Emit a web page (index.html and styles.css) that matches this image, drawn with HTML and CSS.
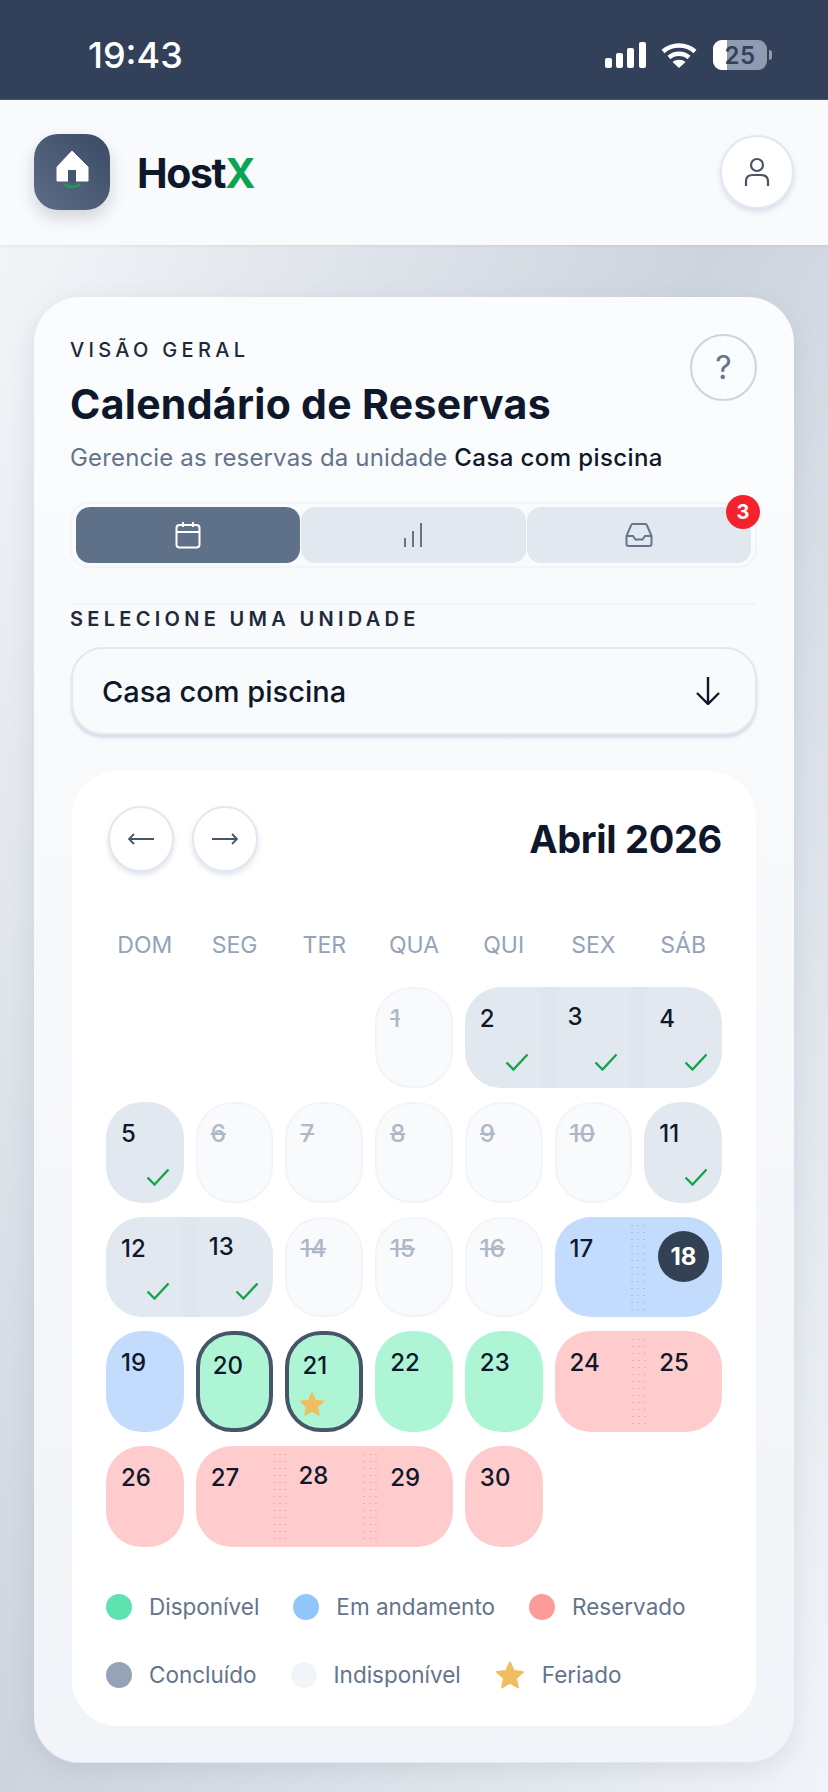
FILE: index.html
```html
<!DOCTYPE html>
<html lang="pt-BR">
<head>
    <meta charset="UTF-8">
    <meta name="viewport" content="width=device-width, initial-scale=1.0">
    <title>HostX - Calendário de Reservas</title>
    <link rel="stylesheet" href="styles.css">
</head>
<body>
    <svg class="defs" width="0" height="0">
        <symbol id="check" viewBox="0 0 24 18"><path d="M1.5 9.5 8.500 16.500 22.500 1.500" fill="none" stroke="#16a34a" stroke-width="2.4"/></symbol>
        <symbol id="star" viewBox="0 0 24 24"><path d="M12 2 15 8.800 22.300 9.600 16.800 14.600 18.400 22 12 18.200 5.600 22 7.200 14.600 1.700 9.600 9 8.800Z" fill="#efbf5f" stroke="#efbf5f" stroke-width="1.500" stroke-linejoin="round"/></symbol>
    </svg>

    <div class="statusbar">
        <span class="time">19:43</span>
        <div class="status-icons">
            <svg class="signal" viewBox="0 0 41 26" width="41" height="26" fill="#fff">
                <rect x="0" y="16" width="7" height="10" rx="2"/>
                <rect x="11" y="11" width="7" height="15" rx="2"/>
                <rect x="22" y="6" width="7" height="20" rx="2"/>
                <rect x="34" y="0" width="7" height="26" rx="2"/>
            </svg>
            <svg class="wifi" viewBox="0 0 36 26" width="36" height="26" fill="none" stroke="#fff" stroke-width="4.400">
                <path d="M2 9.500C11 1.500 25 1.500 34 9.500"/>
                <path d="M8 15.500C13.500 10.500 22.500 10.500 28 15.500"/>
                <path d="M18 26 11.500 20C15 17 21 17 24.500 20Z" fill="#fff" stroke="none"/>
            </svg>
            <div class="battery"><span class="battery-fill"></span><span class="battery-num">25</span></div>
            <span class="battery-nub"></span>
        </div>
    </div>

    <header class="topbar">
        <div class="brand">
            <div class="logo">
                <svg viewBox="0 0 76 76" width="76" height="76">
                    <path d="M38 17 54 33V47H23V33Z" fill="#fff" stroke="#fff" stroke-width="1"/>
                    <rect x="34" y="36" width="8" height="12" fill="#47566f"/>
                    <path d="M31 50C34 54 42 54 46 50" fill="none" stroke="#16a34a" stroke-width="2.400"/>
                </svg>
            </div>
            <span class="brand-name">Host<span class="brand-x">X</span></span>
        </div>
        <button class="round-btn profile-btn">
            <svg viewBox="0 0 26 30" width="26" height="30" fill="none" stroke="#475569" stroke-width="2.200">
                <circle cx="13" cy="8" r="6"/>
                <path d="M2 29V24C2 20 5 18 9 18H17C21 18 24 20 24 24V29"/>
            </svg>
        </button>
    </header>

    <main class="page">
        <section class="card">
            <div class="card-head">
                <div class="card-titles">
                    <p class="eyebrow">VISÃO GERAL</p>
                    <h1 class="title">Calendário de Reservas</h1>
                    <p class="subtitle">Gerencie as reservas da unidade <strong>Casa com piscina</strong></p>
                </div>
                <button class="help-btn">?</button>
            </div>

            <div class="tabs">
                <button class="tab active">
                    <svg viewBox="0 0 26 28" width="26" height="28" fill="none" stroke="#fff" stroke-width="2">
                        <rect x="1.500" y="4" width="23" height="22.500" rx="3"/>
                        <path d="M1.500 11H24.500M8 1V6M18 1V6"/>
                    </svg>
                </button>
                <button class="tab">
                    <svg viewBox="0 0 20 24" width="20" height="24" fill="none" stroke="#64748b" stroke-width="2">
                        <path d="M2 24V15M10 24V8M18 24V0"/>
                    </svg>
                </button>
                <button class="tab">
                    <svg viewBox="0 0 28 24" width="28" height="24" fill="none" stroke="#64748b" stroke-width="2">
                        <path d="M1.500 13V21C1.500 22 2.500 23 3.500 23H24.500C25.500 23 26.500 22 26.500 21V13L22 2.500C21.700 1.500 21 1 20 1H8C7 1 6.300 1.500 6 2.500Z"/>
                        <path d="M1.500 13H8L10.500 16.500H17.500L20 13H26.500"/>
                    </svg>
                </button>
                <span class="badge">3</span>
            </div>

            <div class="divider"></div>

            <p class="field-label">SELECIONE UMA UNIDADE</p>
            <div class="select">
                <span>Casa com piscina</span>
                <svg viewBox="0 0 26 28" width="26" height="28" fill="none" stroke="#0f172a" stroke-width="2.400">
                    <path d="M13 0V27M2 16 13 27 24 16"/>
                </svg>
            </div>

            <div class="calendar">
                <div class="cal-head">
                    <div class="cal-nav">
                        <button class="round-btn nav-btn">
                            <svg viewBox="0 0 26 12" width="26" height="12" fill="none" stroke="#475569" stroke-width="1.800"><path d="M26 6H1M6 1 1 6 6 11"/></svg>
                        </button>
                        <button class="round-btn nav-btn">
                            <svg viewBox="0 0 26 12" width="26" height="12" fill="none" stroke="#475569" stroke-width="1.800"><path d="M0 6H25M20 1 25 6 20 11"/></svg>
                        </button>
                    </div>
                    <h2 class="cal-title">Abril 2026</h2>
                </div>

                <div class="weekdays">
                    <span>DOM</span><span>SEG</span><span>TER</span><span>QUA</span><span>QUI</span><span>SEX</span><span>SÁB</span>
                </div>

                <div class="days">
                    <div class="day off first-day"><span class="num">1</span></div>
                    <div class="range done span-3">
                        <div class="day"><span class="num">2</span><svg class="check"><use href="#check"/></svg></div>
                        <div class="day mid"><span class="num">3</span><svg class="check"><use href="#check"/></svg></div>
                        <div class="day"><span class="num">4</span><svg class="check"><use href="#check"/></svg></div>
                    </div>

                    <div class="day done"><span class="num">5</span><svg class="check"><use href="#check"/></svg></div>
                    <div class="day off"><span class="num">6</span></div>
                    <div class="day off"><span class="num">7</span></div>
                    <div class="day off"><span class="num">8</span></div>
                    <div class="day off"><span class="num">9</span></div>
                    <div class="day off"><span class="num">10</span></div>
                    <div class="day done"><span class="num">11</span><svg class="check"><use href="#check"/></svg></div>

                    <div class="range done span-2">
                        <div class="day"><span class="num">12</span><svg class="check"><use href="#check"/></svg></div>
                        <div class="day mid"><span class="num">13</span><svg class="check"><use href="#check"/></svg></div>
                    </div>
                    <div class="day off"><span class="num">14</span></div>
                    <div class="day off"><span class="num">15</span></div>
                    <div class="day off"><span class="num">16</span></div>
                    <div class="range ongoing span-2">
                        <div class="day"><span class="num">17</span></div>
                        <div class="day"><span class="today">18</span></div>
                    </div>

                    <div class="day ongoing"><span class="num">19</span></div>
                    <div class="day free picked"><span class="num">20</span></div>
                    <div class="day free picked"><span class="num">21</span><svg class="holiday"><use href="#star"/></svg></div>
                    <div class="day free"><span class="num">22</span></div>
                    <div class="day free"><span class="num">23</span></div>
                    <div class="range booked span-2">
                        <div class="day"><span class="num">24</span></div>
                        <div class="day"><span class="num">25</span></div>
                    </div>

                    <div class="day booked"><span class="num">26</span></div>
                    <div class="range booked span-3">
                        <div class="day"><span class="num">27</span></div>
                        <div class="day mid"><span class="num">28</span></div>
                        <div class="day"><span class="num">29</span></div>
                    </div>
                    <div class="day booked"><span class="num">30</span></div>
                </div>

                <div class="legend">
                    <div class="legend-row">
                        <span class="legend-item"><i class="dot dot-free"></i>Disponível</span>
                        <span class="legend-item"><i class="dot dot-ongoing"></i>Em andamento</span>
                        <span class="legend-item"><i class="dot dot-booked"></i>Reservado</span>
                    </div>
                    <div class="legend-row">
                        <span class="legend-item"><i class="dot dot-done"></i>Concluído</span>
                        <span class="legend-item"><i class="dot dot-off"></i>Indisponível</span>
                        <span class="legend-item"><svg class="legend-star"><use href="#star"/></svg>Feriado</span>
                    </div>
                </div>
            </div>
        </section>
    </main>
</body>
</html>
```

FILE: styles.css
```css
* { box-sizing: border-box; }

body {
    margin: 0;
    min-height: 1792px;
    font-family: Inter, "Liberation Sans", sans-serif;
    color: #0f172a;
    background: linear-gradient(to bottom right, #f8fafc 0%, #cdd4de 50%, #f1f5f9 100%);
}

button {
    font-family: inherit;
    padding: 0;
    cursor: pointer;
}

p, h1, h2 { margin: 0; }

.defs { position: absolute; }

/* status bar */
.statusbar {
    height: 100px;
    background: #334059;
    border-bottom: 1px solid #4a566d;
    display: flex;
    align-items: center;
    justify-content: space-between;
    padding: 11px 56px 0 88px;
}
.time {
    color: #fff;
    font-size: 36px;
    font-weight: 500;
}
.status-icons {
    display: flex;
    align-items: center;
}
.signal { margin-right: 15px; }
.wifi { margin-right: 16px; }
.battery {
    position: relative;
    width: 54px;
    height: 30px;
    border-radius: 9px;
    background: #8e9bb0;
    overflow: hidden;
    display: flex;
    align-items: center;
    justify-content: center;
}
.battery-fill {
    position: absolute;
    left: 0;
    top: 0;
    bottom: 0;
    width: 14px;
    background: #fff;
}
.battery-num {
    position: relative;
    color: #334059;
    font-size: 24px;
    font-weight: 600;
    letter-spacing: 0.5px;
}
.battery-nub {
    width: 3px;
    height: 10px;
    margin-left: 2px;
    border-radius: 0 3px 3px 0;
    background: #8e9bb0;
}

/* header */
.topbar {
    height: 145px;
    display: flex;
    align-items: center;
    justify-content: space-between;
    padding: 0 34px;
    background: #f8fafc;
    box-shadow: 0 1px 3px rgba(100, 116, 139, 0.12);
}
.brand {
    display: flex;
    align-items: center;
    gap: 27px;
}
.logo {
    width: 76px;
    height: 76px;
    margin-top: -2px;
    border-radius: 24px;
    background: linear-gradient(45deg, #5d6e89, #3c4a64);
    box-shadow: 0 8px 16px rgba(71, 85, 105, 0.22);
}
.logo svg { display: block; }
.brand-name {
    font-size: 41px;
    font-weight: 700;
    letter-spacing: -1.4px;
    color: #0f172a;
}
.brand-x { color: #0ba354; }

.round-btn {
    border: 2px solid #e2e8f0;
    border-radius: 50%;
    background: #fff;
    display: flex;
    align-items: center;
    justify-content: center;
    box-shadow: 0 3px 5px rgba(148, 163, 184, 0.3);
}
.profile-btn {
    width: 74px;
    height: 74px;
    margin-top: -2px;
}

/* main card */
.page { padding: 52px 34px 29px; }
.card {
    height: 1466px;
    padding: 36px 37px 0 36px;
    border-radius: 46px;
    background: linear-gradient(180deg, #fbfcfd, #f1f4f8);
    box-shadow: 0 8px 24px rgba(100, 116, 139, 0.14), inset 0 -1px 0 #e4e8ee;
}
.card-head {
    display: flex;
    justify-content: space-between;
    align-items: flex-start;
}
.card-titles { padding-top: 5px; }
.eyebrow {
    font-size: 20px;
    line-height: 24px;
    font-weight: 500;
    letter-spacing: 4.300px;
    color: #1e293b;
}
.title {
    margin-top: 18px;
    font-size: 41px;
    line-height: 48px;
    font-weight: 700;
    letter-spacing: 0.3px;
}
.subtitle {
    margin-top: 14px;
    font-size: 24px;
    line-height: 32px;
    letter-spacing: 0.15px;
    color: #64748b;
}
.subtitle strong {
    font-weight: 500;
    letter-spacing: 0.4px;
    color: #0f172a;
}
.help-btn {
    width: 67px;
    height: 67px;
    margin-top: 1px;
    border: 2px solid #cbd5e1;
    border-radius: 50%;
    background: transparent;
    color: #64748b;
    font-size: 32px;
}

/* tabs */
.tabs {
    position: relative;
    display: flex;
    gap: 1px;
    height: 66px;
    margin-top: 28px;
    padding: 3px 4px;
    border: 2px solid #f1f5f9;
    border-radius: 18px;
}
.tab {
    flex: 1;
    border: 0;
    border-radius: 14px;
    background: #e2e8f0;
    display: flex;
    align-items: center;
    justify-content: center;
}
.tab.active { background: #5f7089; }
.badge {
    position: absolute;
    top: -9px;
    right: -5px;
    width: 34px;
    height: 34px;
    border-radius: 50%;
    background: #f5222d;
    color: #fff;
    font-size: 20px;
    font-weight: 700;
    line-height: 34px;
    text-align: center;
}

.divider {
    height: 2px;
    margin-top: 35px;
    background: #f1f5f9;
}
.field-label {
    margin-top: 2px;
    font-size: 20px;
    line-height: 24px;
    font-weight: 600;
    letter-spacing: 4.300px;
    color: #1e293b;
}
.select {
    height: 88px;
    margin: 16px 0 0 1px;
    padding: 0 34px 0 29px;
    display: flex;
    align-items: center;
    justify-content: space-between;
    border: 2px solid #e2e8f0;
    border-radius: 32px;
    background: #f8fafc;
    box-shadow: 0 3px 3px #d5dce6;
    font-size: 29px;
    font-weight: 500;
}

/* calendar */
.calendar {
    margin: 36px 1px 0 2px;
    height: 955px;
    padding: 35px 34px 0;
    border-radius: 46px;
    background: #fff;
}
.cal-head {
    display: flex;
    align-items: center;
    justify-content: space-between;
    padding: 0 0 0 2px;
}
.cal-nav {
    display: flex;
    gap: 18px;
}
.nav-btn {
    width: 66px;
    height: 66px;
}
.cal-title {
    font-size: 38px;
    font-weight: 700;
    letter-spacing: -0.3px;
}
.weekdays, .days {
    display: grid;
    grid-template-columns: repeat(7, 1fr);
    column-gap: 12px;
}
.weekdays {
    margin-top: 58px;
    text-align: center;
    color: #94a3b8;
    font-size: 23px;
    line-height: 30px;
    font-weight: 400;
}
.days {
    margin-top: 27px;
    grid-auto-rows: 100.750px;
    row-gap: 14px;
}
.first-day { grid-column-start: 4; }

.day {
    position: relative;
    display: flex;
    flex-direction: column;
    justify-content: space-between;
    padding: 17px 14px 17px 15px;
    border-radius: 36px;
}
.num {
    font-size: 24px;
    line-height: 30px;
    font-weight: 500;
}
.check {
    width: 24px;
    height: 18px;
    align-self: flex-end;
}
.holiday {
    width: 26px;
    height: 26px;
    margin-left: -3px;
}

.range {
    display: grid;
    column-gap: 12px;
    border-radius: 36px;
}
.span-2 { grid-column: span 2; grid-template-columns: repeat(2, 1fr); }
.span-3 { grid-column: span 3; grid-template-columns: repeat(3, 1fr); }
.range .day { border-radius: 0; }
.range .mid { padding-top: 15px; padding-left: 13px; }

/* band between two days of the same stay */
.range .day + .day::before {
    content: "";
    position: absolute;
    top: 5px;
    bottom: 2px;
    left: -14px;
    width: 16px;
    background-size: 6px 7px;
}
.done .day + .day::before { top: 0; bottom: 0; background: #e0e6ee; }
.ongoing .day + .day::before { background-image: radial-gradient(circle, #93c5fd 0.7px, transparent 1px); }
.booked .day + .day::before { background-image: radial-gradient(circle, #f9a8a8 0.7px, transparent 1px); }

.done { background: #e2e8f0; }
.ongoing { background: #c3dcfe; }
.booked { background: #fecccc; }
.free { background: #aef5d6; }
.off {
    background: #f9fafc;
    border: 2px solid #f1f5f9;
    padding: 15px 13px;
}
.off .num {
    color: #aeb8c6;
    text-decoration: line-through;
}
.picked {
    border: 4px solid #475569;
    padding: 16px 10px 11px 13px;
}
.today {
    position: relative;
    width: 51px;
    height: 51px;
    margin: -3px -1px 0 auto;
    border-radius: 50%;
    background: #334155;
    color: #fff;
    font-size: 24px;
    font-weight: 700;
    line-height: 51px;
    text-align: center;
}

/* legend */
.legend {
    margin-top: 47px;
    display: flex;
    flex-direction: column;
    gap: 42px;
}
.legend-row {
    display: flex;
    gap: 34px;
}
.legend-item {
    display: flex;
    align-items: center;
    gap: 17px;
    height: 26px;
    font-size: 22.500px;
    color: #64748b;
}
.dot {
    width: 26px;
    height: 26px;
    border-radius: 50%;
}
.dot-free { background: #5ee3b0; }
.dot-ongoing { background: #93c5fd; }
.dot-booked { background: #fd9a9a; }
.dot-done { background: #94a3b8; }
.dot-off { background: #f1f5f9; }
.legend-star {
    width: 30px;
    height: 30px;
}
```
